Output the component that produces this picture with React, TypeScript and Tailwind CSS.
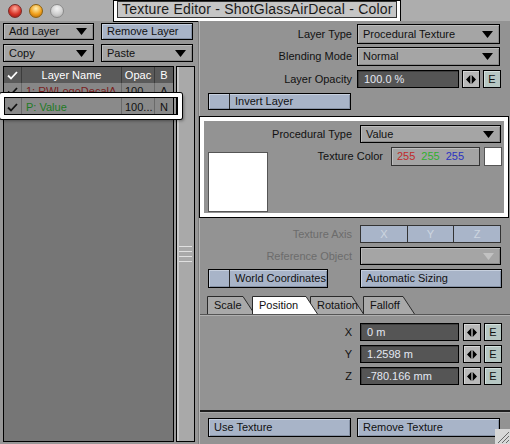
import React from 'react'

function Caret({ dim }: { dim?: boolean }) {
  return (
    <svg width="11" height="7" viewBox="0 0 11 7">
      <path d="M0 0H11L5.5 7Z" fill={dim ? '#c2c2c2' : '#000'} />
    </svg>
  )
}

function Dropdown({ text, className = '', dim }: { text: string; className?: string; dim?: boolean }) {
  return (
    <div
      className={`flex items-center justify-between border border-black bg-[#a5a5a5] pl-[5px] pr-[6px] shadow-[inset_1px_1px_0_#bcbcbc,inset_-1px_-1px_0_#8a8a8a] ${className}`}
    >
      <span>{text}</span>
      <Caret dim={dim} />
    </div>
  )
}

function BlueButton({ text, className = '', box }: { text: string; className?: string; box?: boolean }) {
  return (
    <div
      className={`flex items-center border border-black bg-[#a8b4c8] shadow-[inset_1px_1px_0_#c7d0de,inset_-1px_-1px_0_#8692a6] ${className}`}
    >
      {box && <div className="h-full w-[21px] border-r border-[#2a2a2a]" />}
      <span className="pl-[5px]">{text}</span>
    </div>
  )
}

function ArrowBtn() {
  return (
    <div className="flex h-full w-[18px] items-center justify-center border border-black bg-[#b9b9b9] shadow-[inset_1px_1px_0_#d6d6d6]">
      <svg width="10" height="9" viewBox="0 0 10 9">
        <path d="M0 4.5L4.3 0V9Z M5.7 0L10 4.5L5.7 9Z" fill="#000" />
      </svg>
    </div>
  )
}

function EBtn() {
  return (
    <div className="flex h-full w-[18px] items-center justify-center border border-black bg-[#b6c7c3] text-[11px] shadow-[inset_1px_1px_0_#d5e1de]">
      E
    </div>
  )
}

function DarkField({ text, className = '' }: { text: string; className?: string }) {
  return (
    <div
      className={`flex items-center border border-black bg-[#555555] pl-[6px] text-[#e4e8f2] shadow-[inset_1px_1px_0_#3e3e3e] ${className}`}
    >
      {text}
    </div>
  )
}

function Check({ color }: { color: string }) {
  return (
    <svg width="11" height="9" viewBox="0 0 11 9">
      <path d="M1 4.5L4 7.5L10 1" stroke={color} strokeWidth="1.8" fill="none" />
    </svg>
  )
}

function Tab({ text, w, active, className = '' }: { text: string; w: number; active?: boolean; className?: string }) {
  return (
    <div className={`relative flex h-[18px] items-center pl-[7px] ${className}`} style={{ width: w }}>
      <svg className="absolute inset-0" width={w} height="18" viewBox={`0 0 ${w} 18`}>
        <path
          d={`M0.5 18V0.5H${w - 12}L${w - 0.5} 18`}
          fill={active ? '#ffffff' : '#a9a9a9'}
          stroke="#2a2a2a"
          strokeWidth="1"
        />
      </svg>
      <span className="relative">{text}</span>
    </div>
  )
}

function XYZRow({ axis, value }: { axis: string; value: string }) {
  return (
    <div className="flex h-[18px] items-center">
      <div className="w-[152px] text-right">{axis}</div>
      <DarkField text={value} className="ml-[8px] h-full w-[99px]" />
      <div className="ml-[4px] h-full">
        <ArrowBtn />
      </div>
      <div className="ml-[3px] h-full">
        <EBtn />
      </div>
    </div>
  )
}

export default function App() {
  return (
    <div className="relative flex h-[444px] w-[510px] flex-col overflow-hidden bg-[#979797] font-['Liberation_Sans',Arial,sans-serif] text-[11px] text-[#111]">
      {/* title bar */}
      <div className="flex h-[21px] shrink-0 items-center bg-[#adadad]">
        <div className="ml-[8px] flex gap-[7px]">
          <div className="h-[14px] w-[14px] rounded-full border border-[#7a2a26] bg-[radial-gradient(circle_at_50%_30%,#ffb0a0,#d8362a_55%,#8e1410)]" />
          <div className="h-[14px] w-[14px] rounded-full border border-[#8a6010] bg-[radial-gradient(circle_at_50%_30%,#fff0b0,#f0a01c_55%,#b06008)]" />
          <div className="h-[14px] w-[14px] rounded-full border border-[#8a8a8a] bg-[radial-gradient(circle_at_50%_30%,#f4f4f4,#cfcfcf_55%,#a8a8a8)]" />
        </div>
        <div className="ml-[49px] self-start border border-black bg-white px-[3px] pb-[3px]">
          <div className="flex h-[17px] w-[280px] items-center border border-[#333] bg-[#c6c6c6] pl-[4px] text-[14px] tracking-[0.2px] text-[#1a1a1a]">
            Texture Editor - ShotGlassAirDecal - Color
          </div>
        </div>
      </div>

      <div className="flex min-h-0 flex-1">
        {/* left panel */}
        <div className="flex w-[198px] shrink-0 flex-col pt-[2px]">
          <div className="flex h-[17px] items-stretch">
            <Dropdown text="Add Layer" className="ml-[3px] w-[91px]" />
            <BlueButton text="Remove Layer" className="ml-[7px] w-[92px]" />
          </div>
          <div className="mt-[4px] flex h-[18px] items-stretch">
            <Dropdown text="Copy" className="ml-[3px] w-[91px]" />
            <Dropdown text="Paste" className="ml-[7px] w-[92px]" />
          </div>
          <div className="mt-[4px] flex min-h-0 flex-1 pb-[2px]">
            <div className="ml-[3px] flex w-[171px] flex-col border border-black bg-[#767676]">
              <div className="flex h-[16px] bg-[#5a5a5a] text-white">
                <div className="flex w-[18px] items-center justify-center border-r border-[#3c3c3c]">
                  <Check color="#fff" />
                </div>
                <div className="flex w-[100px] items-center justify-center border-r border-[#3c3c3c]">Layer Name</div>
                <div className="flex w-[33px] items-center justify-center border-r border-[#3c3c3c]">Opac</div>
                <div className="flex flex-1 items-center justify-center">B</div>
              </div>
              <div className="flex h-[16px] bg-[#878787]">
                <div className="flex w-[18px] items-center justify-center border-r border-[#6a6a6a]">
                  <Check color="#111" />
                </div>
                <div className="flex w-[100px] items-center border-r border-[#6a6a6a] pl-[4px] text-[#7a1e1e]">
                  1: RWLogoDecalA
                </div>
                <div className="flex w-[33px] items-center border-r border-[#6a6a6a] pl-[3px]">100</div>
                <div className="flex flex-1 items-center justify-center">A</div>
              </div>
              <div className="relative flex h-[17px] bg-[#8a8a8a]">
                <div className="flex w-[18px] items-center justify-center border-r border-[#6a6a6a]">
                  <Check color="#111" />
                </div>
                <div className="flex w-[100px] items-center border-r border-[#6a6a6a] pl-[4px] text-[#1f7a24]">
                  P: Value
                </div>
                <div className="flex w-[33px] items-center border-r border-[#6a6a6a] pl-[3px]">100...</div>
                <div className="flex flex-1 items-center justify-center">N</div>
                <div className="pointer-events-none absolute -bottom-[3px] -left-[4px] -right-[9px] -top-[6px] rounded-[2px] border-[4px] border-white shadow-[0_0_0_1px_#000,inset_0_0_0_1px_#000,2px_2px_3px_rgba(0,0,0,0.35)]" />
              </div>
            </div>
            {/* scrollbar */}
            <div className="ml-[2px] flex w-[19px] flex-col items-center border border-black bg-[#a9a9a9] pt-[179px] shadow-[inset_2px_0_0_#c9c9c9]">
              <div className="flex w-[13px] flex-col gap-[4px]">
                <div className="h-[1px] bg-[#e0e0e0]" />
                <div className="h-[1px] bg-[#e0e0e0]" />
                <div className="h-[1px] bg-[#e0e0e0]" />
                <div className="h-[1px] bg-[#e0e0e0]" />
              </div>
            </div>
          </div>
        </div>

        {/* divider */}
        <div className="w-[2px] shrink-0 border-l border-[#7c7c7c] bg-[#b4b4b4]" />

        {/* right panel */}
        <div className="flex w-[310px] shrink-0 flex-col bg-[#939393] pt-[3px]">
          <div className="flex h-[20px] items-center">
            <div className="w-[152px] text-right">Layer Type</div>
            <Dropdown text="Procedural Texture" className="ml-[5px] h-full w-[143px]" />
          </div>
          <div className="mt-[3px] flex h-[19px] items-center">
            <div className="w-[152px] text-right">Blending Mode</div>
            <Dropdown text="Normal" className="ml-[5px] h-full w-[143px]" />
          </div>
          <div className="mt-[4px] flex h-[18px] items-center">
            <div className="w-[152px] text-right">Layer Opacity</div>
            <DarkField text="100.0 %" className="ml-[5px] h-full w-[102px]" />
            <div className="ml-[3px] h-full">
              <ArrowBtn />
            </div>
            <div className="ml-[3px] h-full">
              <EBtn />
            </div>
          </div>
          <div className="mt-[5px] flex h-[17px]">
            <BlueButton text="Invert Layer" box className="ml-[8px] w-[143px]" />
          </div>

          {/* highlighted procedural box */}
          <div className="mt-[7px] mr-[2px] border-[4px] border-white shadow-[0_0_0_1px_#000,inset_0_0_0_1px_#333]">
            <div className="flex h-[92px] flex-col bg-[#939393] pt-[4px]">
              <div className="flex h-[18px] items-center">
                <div className="w-[148px] text-right">Procedural Type</div>
                <Dropdown text="Value" className="ml-[8px] h-full w-[141px]" />
              </div>
              <div className="mt-[4px] flex items-start">
                <div className="ml-[4px] mt-[5px] h-[60px] w-[60px] border border-[#555] bg-white" />
                <div className="flex h-[19px] flex-1 items-center justify-end">Texture Color</div>
                <div className="ml-[8px] flex h-[19px] w-[89px] items-center gap-[6px] border border-[#333] bg-[#a4a4a4] pl-[5px] shadow-[inset_1px_1px_0_#bdbdbd]">
                  <span className="text-[#c02a2a]">255</span>
                  <span className="text-[#2fb02f]">255</span>
                  <span className="text-[#2a32c0]">255</span>
                </div>
                <div className="ml-[4px] mr-[2px] h-[19px] w-[18px] border border-[#555] bg-white" />
              </div>
            </div>
          </div>

          <div className="mt-[8px] flex h-[18px] items-center">
            <div className="w-[152px] text-right text-[#6c6c6c]">Texture Axis</div>
            <div className="ml-[8px] flex h-full w-[141px] border border-[#333] bg-[#a9b5c9] text-[#cdd5e0]">
              <div className="flex flex-1 items-center justify-center border-r border-[#333]">X</div>
              <div className="flex flex-1 items-center justify-center border-r border-[#333]">Y</div>
              <div className="flex flex-1 items-center justify-center">Z</div>
            </div>
          </div>
          <div className="mt-[4px] flex h-[18px] items-center">
            <div className="w-[152px] text-right text-[#6c6c6c]">Reference Object</div>
            <Dropdown text="" dim className="ml-[8px] h-full w-[141px]" />
          </div>
          <div className="mt-[4px] flex h-[19px]">
            <BlueButton text="World Coordinates" box className="ml-[8px] w-[120px]" />
            <BlueButton text="Automatic Sizing" className="ml-[32px] w-[142px]" />
          </div>

          {/* tabs */}
          <div className="mt-[8px] flex h-[18px]">
            <Tab text="Scale" w={48} className="ml-[7px]" />
            <Tab text="Rotation" w={54} className="ml-[55px]" />
            <Tab text="Falloff" w={52} className="-ml-[1px]" />
          </div>
          <div className="-mt-[18px] ml-[52px] flex h-[18px]">
            <Tab text="Position" w={66} active />
          </div>
          <div className="h-[2px] border-t border-[#555] bg-[#b0b0b0]" />

          <div className="mt-[7px] flex flex-col gap-[4px]">
            <XYZRow axis="X" value="0 m" />
            <XYZRow axis="Y" value="1.2598 m" />
            <XYZRow axis="Z" value="-780.166 mm" />
          </div>

          <div className="flex-1" />
          <div className="h-[3px] border-t-2 border-[#1e1e1e] bg-[#a8a8a8]" />
          <div className="mt-[5px] mb-[7px] flex h-[19px]">
            <BlueButton text="Use Texture" className="ml-[8px] w-[143px]" />
            <BlueButton text="Remove Texture" className="ml-[6px] w-[143px]" />
          </div>
        </div>
      </div>

      {/* resize grip */}
      <svg className="absolute bottom-0 right-0" width="15" height="15" viewBox="0 0 15 15">
        <rect width="15" height="15" fill="#d8d8d8" />
        <path d="M3 14L14 3 M7 14L14 7 M11 14L14 11" stroke="#6a6a6a" strokeWidth="1" />
      </svg>
    </div>
  )
}
